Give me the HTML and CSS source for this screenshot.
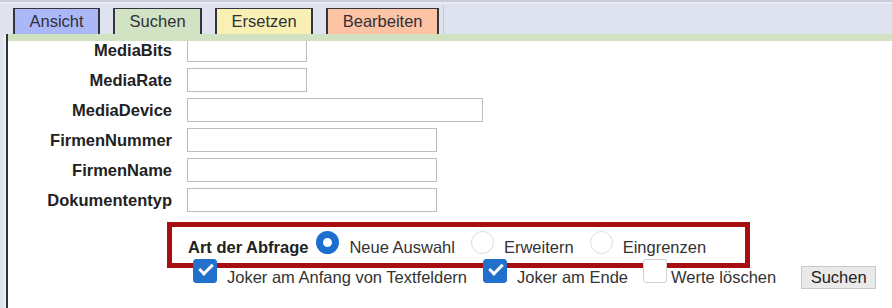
FILE: index.html
```html
<!DOCTYPE html>
<html lang="de">
<head>
<meta charset="utf-8">
<title>Suchen</title>
<link rel="stylesheet" href="styles.css">
</head>
<body>
  <div class="tabbar">
    <div class="tab tab-ansicht">Ansicht</div>
    <div class="tab tab-suchen">Suchen</div>
    <div class="tab tab-ersetzen">Ersetzen</div>
    <div class="tab tab-bearbeiten">Bearbeiten</div>
    <div class="tabbar-end"></div>
  </div>
  <div class="panel">
    <div class="strip"></div>
    <div class="panel-body">
      <div class="fields">
        <label class="field-label">MediaBits</label><input class="field w-s" type="text">
        <label class="field-label">MediaRate</label><input class="field w-s" type="text">
        <label class="field-label">MediaDevice</label><input class="field w-l" type="text">
        <label class="field-label">FirmenNummer</label><input class="field w-m" type="text">
        <label class="field-label">FirmenName</label><input class="field w-m" type="text">
        <label class="field-label">Dokumententyp</label><input class="field w-m" type="text">
      </div>
      <div class="query">
        <span class="query-title">Art der Abfrage</span>
        <label class="opt opt-first"><input class="radio" type="radio" name="art" checked><span class="opt-text">Neue Auswahl</span></label>
        <label class="opt"><input class="radio" type="radio" name="art"><span class="opt-text">Erweitern</span></label>
        <label class="opt"><input class="radio" type="radio" name="art"><span class="opt-text">Eingrenzen</span></label>
      </div>
      <div class="options">
        <label class="chk chk-first"><input class="box" type="checkbox" checked><span class="opt-text">Joker am Anfang von Textfeldern</span></label>
        <label class="chk"><input class="box" type="checkbox" checked><span class="opt-text">Joker am Ende</span></label>
        <label class="chk chk-narrow"><input class="box" type="checkbox"><span class="opt-text">Werte löschen</span></label>
        <button class="btn" type="button">Suchen</button>
      </div>
    </div>
  </div>
</body>
</html>
```
FILE: styles.css
```css
html, body {
  margin: 0;
  padding: 0;
}
body {
  width: 892px;
  height: 308px;
  overflow: hidden;
  background: #dfe3ef;
  font-family: "Liberation Sans", Arial, sans-serif;
  font-size: 16.5px;
  color: #333;
}
.tabbar {
  display: flex;
  align-items: flex-end;
  gap: 13px;
  height: 32px;
  padding: 0 0 0 13px;
  border-top: 2px solid #c9cdd9;
  box-shadow: inset 0 2px 0 #e9ecf4;
}
.tab {
  height: 26px;
  box-sizing: border-box;
  padding: 0 14.5px;
  border: 2px solid #34343f;
  border-top-width: 1px;
  border-bottom: none;
  line-height: 25px;
  color: #30303a;
  white-space: nowrap;
}
.tab-ansicht { background: #aab8f7; }
.tab-suchen { background: #d1e3c3; }
.tab-ersetzen { background: #f8f0b4; }
.tab-bearbeiten { background: #fdc3a5; }
.tabbar-end {
  align-self: stretch;
  width: 0;
  margin: 3px 0 0 -9px;
  border-left: 1px solid #c4c8d4;
}
.panel {
  margin-left: 6px;
  height: 274px;
  border-left: 2px solid #33333d;
  box-shadow: -2px 0 0 #eef0f7;
  background: #fff;
  display: flex;
  flex-direction: column;
}
.strip {
  height: 7px;
  flex: none;
  background: #d0e2c2;
}
.panel-body {
  flex: 1;
  overflow: hidden;
}
.fields {
  display: grid;
  grid-template-columns: 164px auto;
  column-gap: 15px;
  row-gap: 6px;
  align-items: center;
  justify-items: start;
  margin-top: -3px;
}
.field-label {
  justify-self: end;
  font-weight: bold;
  color: #222;
  white-space: nowrap;
}
.field {
  height: 24px;
  box-sizing: border-box;
  margin: 0;
  border: 1px solid #bdbdbd;
  background: #fff;
  padding: 0 4px;
}
.w-s { width: 120px; }
.w-m { width: 250px; }
.w-l { width: 296px; }

.query {
  display: flex;
  align-items: flex-end;
  box-sizing: border-box;
  width: 583px;
  height: 46px;
  margin: 10px 0 0 159px;
  padding: 0 0 7px 16px;
  border: 5px solid #a80d12;
}
.query-title {
  font-weight: bold;
  line-height: 18px;
  color: #222;
  white-space: nowrap;
}
.opt {
  display: flex;
  align-items: flex-end;
  gap: 10px;
  margin-left: 16px;
}
.opt-first { margin-left: 8px; }
.opt-text {
  line-height: 18px;
  white-space: nowrap;
  color: #333;
}
.radio {
  appearance: none;
  -webkit-appearance: none;
  width: 23px;
  height: 23px;
  box-sizing: border-box;
  margin: 0 0 2px 0;
  border: 1px solid #dcdcdc;
  border-radius: 50%;
  background: #fff;
}
.radio:checked {
  border: 7px solid #1c6fd0;
}

.options {
  position: relative;
  display: flex;
  align-items: flex-end;
  margin: -9px 0 0 185px;
}
.chk {
  display: flex;
  align-items: flex-end;
  gap: 10px;
  margin-left: 16px;
}
.chk .opt-text { margin-bottom: 3px; }
.chk-first { margin-left: 0; }
.chk-narrow { gap: 4px; margin-left: 15px; }
.box {
  appearance: none;
  -webkit-appearance: none;
  position: relative;
  width: 24px;
  height: 24px;
  box-sizing: border-box;
  margin: 0 0 6px 0;
  border: 1px solid #d2d2d2;
  border-radius: 3px;
  background: #fff;
}
.box:checked {
  border-color: #2170cc;
  background: #2170cc;
}
.box:checked::after {
  content: "";
  position: absolute;
  left: 5px;
  top: 4px;
  width: 11px;
  height: 5px;
  border-left: 3px solid #fff;
  border-bottom: 3px solid #fff;
  transform: rotate(-45deg);
}
.btn {
  margin: 0 0 0 25px;
  height: 23px;
  width: 75px;
  padding: 0;
  border: 1px solid #c8c8c8;
  background: #e9e9e9;
  font-family: "Liberation Sans", Arial, sans-serif;
  font-size: 16.5px;
  color: #222;
  text-align: center;
}
```
